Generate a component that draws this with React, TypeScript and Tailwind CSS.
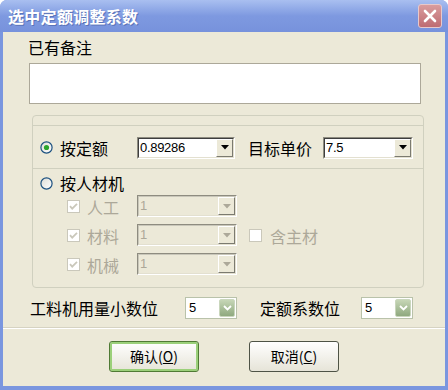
import React from "react";

const Radio = ({ checked }: { checked?: boolean }) => (
  <svg width="13" height="13" viewBox="0 0 13 13" className="shrink-0">
    <defs>
      <linearGradient id={checked ? "rg1" : "rg2"} x1="0" y1="0" x2="1" y2="1">
        <stop offset="0" stopColor="#DCDCD5" />
        <stop offset="1" stopColor="#FFFFFF" />
      </linearGradient>
    </defs>
    <circle cx="6.5" cy="6.5" r="5.6" fill={`url(#${checked ? "rg1" : "rg2"})`} stroke="#1C5180" strokeWidth="1.2" />
    {checked && <circle cx="6.5" cy="6.5" r="2.6" fill="#2CA52C" />}
  </svg>
);

const Check = ({ checked }: { checked?: boolean }) => (
  <svg width="13" height="13" viewBox="0 0 13 13" className="shrink-0">
    <rect x="0.5" y="0.5" width="12" height="12" fill="#FFFFFF" stroke="#CAC8BB" />
    {checked && <path d="M3 6.2 L5.2 8.6 L10 3.8" fill="none" stroke="#CAC8BB" strokeWidth="1.8" />}
  </svg>
);

const Arrow = ({ color }: { color: string }) => (
  <svg width="8" height="5" viewBox="0 0 8 5">
    <path d="M0 0 H8 L4 4.5 Z" fill={color} />
  </svg>
);

// classic sunken combo
const Combo = ({ value, width, disabled }: { value: string; width: string; disabled?: boolean }) => (
  <div className={`${width} h-[22px] flex border border-t-[#8E8C80] border-l-[#8E8C80] border-b-white border-r-white`}>
    <div className={`flex-1 flex border border-t-[#3E3E3E] border-l-[#3E3E3E] border-b-[#E3E0D0] border-r-[#E3E0D0] ${disabled ? "bg-[#ECE9D8] border-t-[#C9C7BA] border-l-[#C9C7BA]" : "bg-white"}`}>
      <div className={`flex-1 pl-[1px] text-[13px] leading-[18px] tracking-[-0.3px] font-['Liberation_Sans',sans-serif] ${disabled ? "text-[#ACA899]" : "text-black"}`}>
        {value}
      </div>
      <div className="w-[17px] h-[18px] flex items-center justify-center bg-[#ECE9D8] border border-t-white border-l-white border-b-[#7B7A70] border-r-[#7B7A70]">
        <Arrow color={disabled ? "#ACA899" : "#000000"} />
      </div>
    </div>
  </div>
);

// xp styled combo with green button
const XpCombo = ({ value }: { value: string }) => (
  <div className="w-[52px] h-[22px] flex items-center border border-[#B9C2AA] bg-white pr-[1px]">
    <div className="flex-1 pl-[3px] text-[13px] leading-[18px] font-['Liberation_Sans',sans-serif] text-black">{value}</div>
    <div className="w-[16px] h-[18px] rounded-[2px] border border-[#C9D6BC] bg-gradient-to-b from-[#C6D6B6] to-[#8FA97F] flex items-center justify-center">
      <svg width="9" height="6" viewBox="0 0 9 6">
        <path d="M1 1 L4.5 4.5 L8 1" fill="none" stroke="#FFFFFF" strokeWidth="1.8" />
      </svg>
    </div>
  </div>
);

const App = () => {
  return (
    <div className="w-[448px] h-[390px] bg-white font-['Noto_Sans_CJK_SC',sans-serif] text-black">
      <div className="w-[448px] h-[390px] flex flex-col rounded-t-[7px] bg-[#7A96DF]">
        {/* title bar */}
        <div className="h-[32px] flex items-center rounded-t-[7px] bg-gradient-to-b from-[#A9BFF0] via-[#7E99E0] to-[#7792DC] pl-[8px] pr-[6px]">
          <div className="flex-1 text-white text-[16px] font-bold tracking-[0.3px] [text-shadow:1px_1px_0_#5B73B8]">
            选中定额调整系数
          </div>
          <div className="w-[24px] h-[24px] rounded-[3px] border border-[#E8C8CA] bg-gradient-to-b from-[#D99C9E] to-[#BE6C72] flex items-center justify-center">
            <svg width="14" height="14" viewBox="0 0 14 14">
              <path d="M2 2 L12 12 M12 2 L2 12" stroke="#FFFFFF" strokeWidth="2.6" strokeLinecap="round" />
            </svg>
          </div>
        </div>

        {/* body */}
        <div className="flex-1 mx-[3px] mb-[4px] bg-[#ECE9D8] flex flex-col">
          <div className="mt-[5px] ml-[25px] h-[20px] text-[16px] leading-[20px]">已有备注</div>
          <div className="mt-[6px] ml-[26px] w-[392px] h-[41px] bg-white border border-[#ACA899]" />

          {/* group box */}
          <div className="mt-[11px] ml-[29px] w-[392px] h-[173px] rounded-[4px] border border-[#D0D0BF] flex flex-col">
            <div className="mt-[9px] h-[44px] border-y border-[#D0D0BF] flex items-center pl-[7px] pt-[1px]">
              <Radio checked />
              <div className="ml-[7px] w-[77px] text-[16px] leading-[20px]">按定额</div>
              <Combo value="0.89286" width="w-[98px]" />
              <div className="ml-[13px] w-[75px] text-[16px] leading-[20px]">目标单价</div>
              <Combo value="7.5" width="w-[90px]" />
            </div>
            <div className="flex flex-col pt-[5px]">
              <div className="h-[18px] flex items-center pl-[7px]">
                <Radio />
                <div className="ml-[7px] text-[16px] leading-[18px]">按人材机</div>
              </div>
              <div className="mt-[3px] flex flex-col gap-[7px]">
                {["人工", "材料", "机械"].map((t) => (
                  <div key={t} className="h-[22px] flex items-center pl-[34px]">
                    <Check checked />
                    <div className="ml-[7px] w-[50px] pt-[2px] text-[16px] leading-[18px] text-[#ACA899]">{t}</div>
                    <Combo value="1" width="w-[100px]" disabled />
                    {t === "材料" && (
                      <>
                        <div className="ml-[12px]">
                          <Check />
                        </div>
                        <div className="ml-[8px] pt-[2px] text-[16px] leading-[18px] text-[#ACA899]">含主材</div>
                      </>
                    )}
                  </div>
                ))}
              </div>
            </div>
          </div>

          {/* decimals row */}
          <div className="mt-[9px] h-[22px] flex items-center pl-[27px]">
            <div className="w-[155px] text-[16px] leading-[20px]">工料机用量小数位</div>
            <XpCombo value="5" />
            <div className="ml-[23px] w-[101px] text-[16px] leading-[20px]">定额系数位</div>
            <XpCombo value="5" />
          </div>

          <div className="mt-[8px] border-t border-[#D6D3C2] border-b border-b-white" />

          {/* buttons */}
          <div className="mt-[12px] flex pl-[106px]">
            <div className="w-[90px] h-[31px] rounded-[3px] border border-[#4F7A34] bg-gradient-to-b from-white to-[#E6E4D8] shadow-[inset_0_0_0_2px_#9BD07A] flex items-center justify-center text-[14px]">
              确认(<span className="underline">O</span>)
            </div>
            <div className="ml-[50px] w-[90px] h-[31px] rounded-[3px] border border-[#4E5346] bg-gradient-to-b from-white to-[#E6E4D8] flex items-center justify-center text-[14px]">
              取消(<span className="underline">C</span>)
            </div>
          </div>
        </div>
      </div>
    </div>
  );
};

export default App;
